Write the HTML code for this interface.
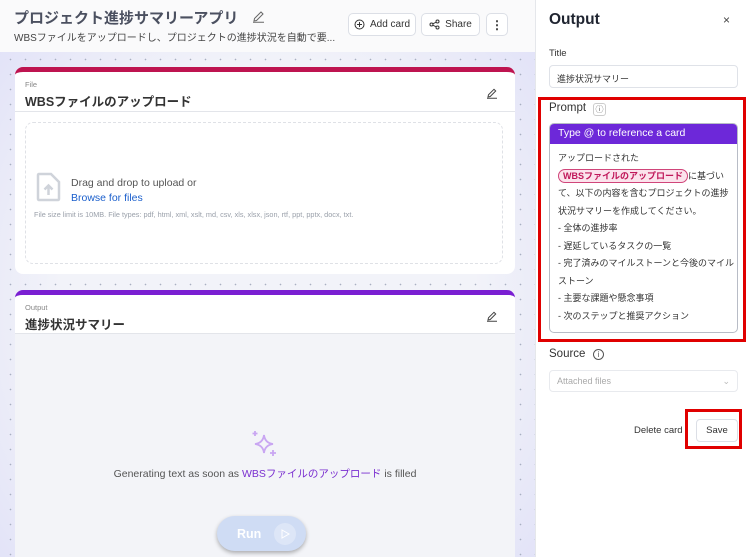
<!DOCTYPE html>
<html><head><meta charset="utf-8"><style>
*{box-sizing:border-box;margin:0;padding:0}
html,body{width:750px;height:557px;overflow:hidden}
body{position:relative;font-family:"Liberation Sans","Noto Sans CJK JP",sans-serif;background:#fff;color:#333}
.a{position:absolute}
#left{left:0;top:0;width:535px;height:557px;background-color:#f2f3f9;background-image:radial-gradient(circle,#a9b0c2 0.6px,transparent 1px),radial-gradient(ellipse at 50% 55%,rgba(255,255,255,0) 55%,rgba(200,200,245,.45) 100%);background-size:15px 15px,100% 100%;background-position:3px 7px,0 0}
#hdr{left:0;top:0;width:535px;height:52px;background:#fafafb}
.btn{position:absolute;background:#fff;border:1px solid #dcdfe6;border-radius:5px;font-size:10px;color:#333;display:flex;align-items:center;justify-content:center;gap:5px}
.card{position:absolute;left:15px;width:500px;background:#fff;border-radius:8px;overflow:hidden}
.lab{position:absolute;left:10px;font-size:7.5px;color:#888}
.ttl{position:absolute;left:10px;font-size:12.5px;font-weight:bold;color:#333;white-space:nowrap}
.pl{font-size:9px;color:#333;line-height:17.5px;white-space:nowrap}
</style></head><body>
<div id="left" class="a"></div>
<div id="hdr" class="a"></div>
<div class="a" style="left:14px;top:7px;font-size:15px;font-weight:bold;color:#4b5060;white-space:nowrap">プロジェクト進捗サマリーアプリ</div>
<svg class="a" style="left:252px;top:10px" width="13" height="13" viewBox="0 0 13 13"><path d="M2 11 L2.5 8.5 L9 2 L11 4 L4.5 10.5 Z M1 12.3 H12" fill="none" stroke="#666" stroke-width="1"/></svg>
<div class="a" style="left:14px;top:29px;font-size:10px;color:#444;white-space:nowrap">WBSファイルをアップロードし、プロジェクトの進捗状況を自動で要...</div>
<div class="btn" style="left:348px;top:13px;width:68px;height:23px"><svg width="11" height="11" viewBox="0 0 11 11"><circle cx="5.5" cy="5.5" r="4.5" fill="none" stroke="#333"/><path d="M5.5 3v5M3 5.5h5" stroke="#333"/></svg>Add card</div>
<div class="btn" style="left:421px;top:13px;width:59px;height:23px"><svg width="11" height="11" viewBox="0 0 11 11"><circle cx="8.5" cy="2.5" r="1.5" fill="none" stroke="#333"/><circle cx="2.5" cy="5.5" r="1.5" fill="none" stroke="#333"/><circle cx="8.5" cy="8.5" r="1.5" fill="none" stroke="#333"/><path d="M3.8 4.8 7.2 3.2M3.8 6.2 7.2 7.8" stroke="#333"/></svg>Share</div>
<div class="btn" style="left:486px;top:13px;width:22px;height:23px;font-weight:bold;font-size:12px">⋮</div>

<div class="card" style="top:67px;height:207px;border-top:5px solid #be1450">
<div class="lab" style="top:8px">File</div>
<div class="ttl" style="top:19px">WBSファイルのアップロード</div>
<svg class="a" style="left:471px;top:15px" width="12" height="12" viewBox="0 0 12 12"><path d="M2 10 L2.5 7.8 L8 2.3 L9.7 4 L4.2 9.5 Z M1 11.3 H11" fill="none" stroke="#444"/></svg>
<div class="a" style="left:0;top:39px;width:500px;border-top:1px solid #e3e5ea"></div>
<div class="a" style="left:10px;top:50px;width:478px;height:142px;border:1.5px dashed #dfe1e6;border-radius:8px"></div>
<svg class="a" style="left:21px;top:100px" width="25" height="30" viewBox="0 0 25 30"><path d="M3 2h12l8 8v17a1 1 0 0 1-1 1H3a1 1 0 0 1-1-1V3a1 1 0 0 1 1-1z" fill="none" stroke="#cfd3da" stroke-width="2.5"/><path d="M12.5 23v-9M8.5 17.5l4-4 4 4" fill="none" stroke="#cfd3da" stroke-width="2.5"/></svg>
<div class="a" style="left:56px;top:105px;font-size:10.5px;color:#555">Drag and drop to upload or</div>
<div class="a" style="left:56px;top:120px;font-size:10.5px;color:#1b5fcc">Browse for files</div>
<div class="a" style="left:19px;top:138px;font-size:7.3px;color:#9aa0aa">File size limit is 10MB. File types: pdf, html, xml, xslt, md, csv, xls, xlsx, json, rtf, ppt, pptx, docx, txt.</div>
</div>

<div class="card" style="top:290px;height:275px;border-top:5px solid #7a1fd2;background:#f3f4f8">
<div class="a" style="left:0;top:0;width:500px;height:39px;background:#fff;border-bottom:1px solid #e3e5ea"></div>
<div class="lab" style="top:8px">Output</div>
<div class="ttl" style="top:19px">進捗状況サマリー</div>
<svg class="a" style="left:471px;top:15px" width="12" height="12" viewBox="0 0 12 12"><path d="M2 10 L2.5 7.8 L8 2.3 L9.7 4 L4.2 9.5 Z M1 11.3 H11" fill="none" stroke="#444"/></svg>
<svg class="a" style="left:236px;top:135px" width="28" height="28" viewBox="0 0 28 28"><path d="M13 5 Q14 13 22 14 Q14 15 13 23 Q12 15 4 14 Q12 13 13 5Z" fill="none" stroke="#c9a6f2" stroke-width="1.8"/><path d="M4 1v5M1.5 3.5h5M22 20v6M19 23h6" stroke="#c9a6f2" stroke-width="1.8"/></svg>
<div class="a" style="left:0;top:171px;width:500px;text-align:center;font-size:10.5px;color:#555">Generating text as soon as <span style="color:#7a2fd0">WBSファイルのアップロード</span> is filled</div>
<div class="a" style="left:202px;top:221px;width:89px;height:35px;border-radius:18px;background:#cfdcf4;box-shadow:0 2px 4px rgba(0,0,0,.3);color:#fff;font-size:12.5px;font-weight:bold;display:flex;align-items:center;padding-left:20px;gap:13px">Run<span style="width:22px;height:22px;border-radius:11px;background:#dde6f7;display:inline-flex;align-items:center;justify-content:center"><svg width="10" height="10" viewBox="0 0 10 10"><path d="M2 1l7 4-7 4z" fill="none" stroke="#fff"/></svg></span></div>
</div>

<div class="a" style="left:535px;top:0;width:215px;height:557px;background:#fff;border-left:1px solid #e5e7eb"></div>
<div class="a" style="left:549px;top:11px;font-size:15.5px;font-weight:bold;color:#1f2430">Output</div>
<div class="a" style="left:723px;top:13px;font-size:12px;color:#444">×</div>
<div class="a" style="left:549px;top:48px;font-size:9.5px;color:#333">Title</div>
<div class="a" style="left:549px;top:65px;width:189px;height:23px;border:1px solid #dfe2e8;border-radius:4px;font-size:9px;color:#333;padding:6px 7px">進捗状況サマリー</div>
<div class="a" style="left:538px;top:97px;width:208px;height:245px;border:3px solid #e00000"></div>
<div class="a" style="left:549px;top:102px;font-size:11.5px;color:#333">Prompt</div>
<div class="a" style="left:593px;top:103px;width:13px;height:13px;border:1px solid #ccc;border-radius:3px;font-size:8px;color:#666;text-align:center;line-height:11px">ⓘ</div>
<div class="a" style="left:549px;top:123px;width:189px;height:210px;border:1px solid #b8bcc6;border-radius:5px;overflow:hidden">
<div style="height:20px;background:#6d28d9;color:#fff;font-size:10.5px;padding:3px 8px">Type @ to reference a card</div>
<div class="pl" style="padding:6px 8px">アップロードされた<br><span style="border:1px solid #d0457a;background:#fbe3ec;color:#c0185a;border-radius:9px;padding:1px 4px;font-weight:bold">WBSファイルのアップロード</span>に基づい<br>て、以下の内容を含むプロジェクトの進捗<br>状況サマリーを作成してください。<br>- 全体の進捗率<br>- 遅延しているタスクの一覧<br>- 完了済みのマイルストーンと今後のマイル<br>ストーン<br>- 主要な課題や懸念事項<br>- 次のステップと推奨アクション</div>
</div>
<div class="a" style="left:549px;top:348px;font-size:11.5px;color:#333">Source</div>
<div class="a" style="left:593px;top:349px;width:11px;height:11px;border:1px solid #555;border-radius:50%;font-size:8px;color:#555;text-align:center;line-height:10px">i</div>
<div class="a" style="left:549px;top:370px;width:189px;height:22px;border:1px solid #e8eaee;border-radius:4px;font-size:9px;color:#aaa;padding:5px 7px">Attached files<span style="float:right;color:#bbb">⌄</span></div>
<div class="a" style="left:634px;top:425px;font-size:9.5px;color:#333">Delete card</div>
<div class="a" style="left:685px;top:409px;width:57px;height:40px;border:3px solid #e00000"></div>
<div class="a" style="left:696px;top:419px;width:42px;height:23px;border:1px solid #dcdfe6;border-radius:4px;font-size:9.5px;color:#333;text-align:center;line-height:21px">Save</div>
</body></html>
